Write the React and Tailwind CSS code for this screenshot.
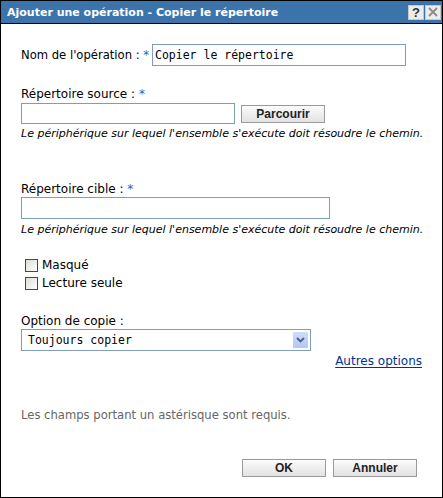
import { useState } from "react";

const Asterisk = () => <span className="text-[#2c62b0]">*</span>;

const HelpText = ({ className = "" }) => (
  <p className={`whitespace-nowrap text-[11px] italic leading-[13px] text-black ${className}`}>
    Le périphérique sur lequel l'ensemble s'exécute doit résoudre le chemin.
  </p>
);

const Checkbox = ({ label, checked, onChange }) => (
  <label className="flex h-[18px] items-center gap-[4px] pl-[4px]" onClick={onChange}>
    <span className="flex h-[13px] w-[13px] items-center justify-center border border-[#1c5180] bg-gradient-to-br from-[#dcdcd7] to-[#ffffff]">
      {checked && <span className="text-[10px] leading-none">✓</span>}
    </span>
    <span className="text-[12px] leading-[16px]">{label}</span>
  </label>
);

const GrayButton = ({ children, className = "" }) => (
  <button
    className={`h-[18px] w-[84px] border border-[#9a9a9a] bg-gradient-to-b from-[#fbfbfb] to-[#e2e2e2] font-['Liberation_Sans',Arial,sans-serif] text-[12px] font-bold leading-[16px] text-[#222] ${className}`}
  >
    {children}
  </button>
);

export default function App() {
  const [name, setName] = useState("Copier le répertoire");
  const [hidden, setHidden] = useState(false);
  const [readOnly, setReadOnly] = useState(false);

  return (
    <div className="flex h-[498px] w-[443px] flex-col overflow-hidden border border-black bg-white font-['DejaVu_Sans',Verdana,sans-serif] text-black">
      {/* title bar */}
      <div className="flex h-[23px] shrink-0 items-center justify-between border-b border-black bg-[#3a74aa] pl-[6px] pr-[1px]">
        <span className="text-[11px] font-bold leading-none text-white">
          Ajouter une opération - Copier le répertoire
        </span>
        <div className="flex gap-[1px]">
          <span className="flex h-[15px] w-[16px] items-center justify-center border border-[#c8c8c8] bg-[#ececec] font-['Liberation_Sans',Arial,sans-serif] text-[13px] font-bold leading-none text-[#333]">
            ?
          </span>
          <span className="flex h-[15px] w-[16px] items-center justify-center border border-[#c8c8c8] bg-[#ececec]">
            <svg width="10" height="10" viewBox="0 0 10 10">
              <path d="M1 1 L9 9 M9 1 L1 9" stroke="#8a8a8a" strokeWidth="1.8" />
            </svg>
          </span>
        </div>
      </div>

      <div className="flex flex-1 flex-col pl-[20px] pr-[20px] text-[12px] leading-[16px]">
        <div className="mt-[20px] flex items-center">
          <span className="w-[131px] whitespace-nowrap text-[11.6px]">
            Nom de l'opération : <Asterisk />
          </span>
          <input
            value={name}
            onChange={(e) => setName(e.target.value)}
            className="h-[22px] w-[254px] border border-[#7f9db9] px-[2px] font-['DejaVu_Sans_Mono',monospace] text-[11.5px] outline-none"
          />
        </div>

        <div className="mt-[20px] h-[16px]">
          Répertoire source : <Asterisk />
        </div>
        <div className="mt-[1px] flex items-center gap-[6px]">
          <input className="h-[21px] w-[214px] border border-[#7f9db9] outline-none" />
          <GrayButton>Parcourir</GrayButton>
        </div>
        <HelpText className="mt-[3px]" />

        <div className="mt-[41px] h-[16px]">
          Répertoire cible : <Asterisk />
        </div>
        <input className="h-[22px] w-[309px] border border-[#7f9db9] outline-none" />
        <HelpText className="mt-[4px]" />

        <div className="mt-[20px] flex flex-col">
          <Checkbox label="Masqué" checked={hidden} onChange={() => setHidden(!hidden)} />
          <Checkbox label="Lecture seule" checked={readOnly} onChange={() => setReadOnly(!readOnly)} />
        </div>

        <div className="mt-[21px] h-[16px]">Option de copie :</div>
        <div className="flex h-[22px] w-[290px] items-center justify-between border border-[#7f9db9] pl-[6px] pr-[2px]">
          <span className="font-['DejaVu_Sans_Mono',monospace] text-[11.5px]">Toujours copier</span>
          <span className="flex h-[16px] w-[15px] items-center justify-center rounded-[1px] bg-gradient-to-b from-[#cfdcfb] to-[#b2c7f4]">
            <svg width="9" height="6" viewBox="0 0 9 6">
              <path d="M1 1 L4.5 4.5 L8 1" stroke="#4d6185" strokeWidth="1.8" fill="none" />
            </svg>
          </span>
        </div>
        <div className="mt-[2px] flex h-[16px] justify-end">
          <a href="#" className="text-[12px] text-[#003399] underline underline-offset-2">
            Autres options
          </a>
        </div>

        <p className="mt-[38px] text-[11.6px] text-[#666]">Les champs portant un astérisque sont requis.</p>

        <div className="mt-[36px] flex justify-end gap-[7px] pr-[5px]">
          <GrayButton>OK</GrayButton>
          <GrayButton>Annuler</GrayButton>
        </div>
      </div>
    </div>
  );
}
